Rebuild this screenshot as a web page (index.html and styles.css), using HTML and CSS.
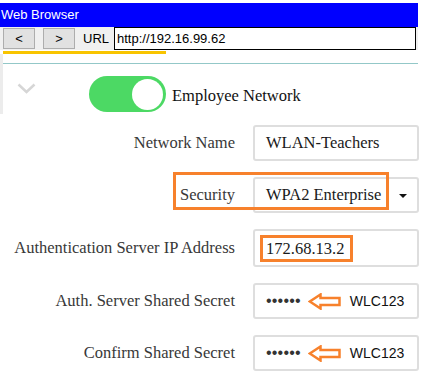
FILE: index.html
```html
<!DOCTYPE html>
<html lang="en">
<head>
  <meta charset="UTF-8" />
  <meta name="viewport" content="width=device-width, initial-scale=1.0"/>
  <title>Web Browser</title>
  <link rel="stylesheet" href="styles.css">
</head>
<body>
  <!-- Browser chrome -->
  <div class="browser">
    <div class="titlebar">Web Browser</div>
    <div class="toolbar">
      <button class="nav-btn">&lt;</button>
      <button class="nav-btn">&gt;</button>
      <span class="url-label">URL</span>
      <div class="url-field">http://192.16.99.62</div>
    </div>
    <div class="tab-line"></div>

    <!-- Network header -->
    <div class="page-top">
      <div class="divider"></div>
      <div class="network-head">
        <svg class="chevron" width="19" height="11" viewBox="0 0 19 11">
          <path d="M1.5 1.5 L9.5 9 L17.5 1.5" fill="none" stroke="#d6d6d6" stroke-width="2.5"/>
        </svg>
        <div class="toggle on"><span class="knob"></span></div>
        <span class="network-title">Employee Network</span>
      </div>
    </div>
  </div>

  <!-- WLAN form -->
  <div class="form">
    <div class="row">
      <label>Network Name</label>
      <div class="field">WLAN-Teachers</div>
    </div>
    <div class="row">
      <label>Security</label>
      <div class="field select">WPA2 Enterprise<span class="caret"></span></div>
    </div>
    <div class="row tall">
      <label>Authentication Server IP Address</label>
      <div class="field"><span class="mark">172.68.13.2</span></div>
    </div>
    <div class="row">
      <label>Auth. Server Shared Secret</label>
      <div class="field secret">
        <span class="dots">&bull;&bull;&bull;&bull;&bull;&bull;</span>
        <svg class="arrow" width="33" height="17" viewBox="0 0 33 17">
          <path d="M1.8 8.5 L12.5 1.5 L12.5 5 L31.5 5 L31.5 12 L12.5 12 L12.5 15.5 Z" fill="none" stroke="#f7812c" stroke-width="2.5" stroke-linejoin="miter"/>
        </svg>
        <span class="hint">WLC123</span>
      </div>
    </div>
    <div class="row">
      <label>Confirm Shared Secret</label>
      <div class="field secret">
        <span class="dots">&bull;&bull;&bull;&bull;&bull;&bull;</span>
        <svg class="arrow" width="33" height="17" viewBox="0 0 33 17">
          <path d="M1.8 8.5 L12.5 1.5 L12.5 5 L31.5 5 L31.5 12 L12.5 12 L12.5 15.5 Z" fill="none" stroke="#f7812c" stroke-width="2.5" stroke-linejoin="miter"/>
        </svg>
        <span class="hint">WLC123</span>
      </div>
    </div>

    <!-- callout around the security setting -->
    <div class="callout"></div>
  </div>
</body>
</html>
```

FILE: styles.css
```css
/* Browser frame + WLAN settings mockup */
body { margin: 0; background: #fff; font-family: "Liberation Serif", serif; }

.browser { width: 418px; padding-top: 3px; }
.titlebar { height: 24px; line-height: 24px; padding-left: 1px; background: #0000ff; color: #fff; font: 13px/24px "Liberation Sans", Arial, sans-serif; }

.toolbar { height: 23px; display: flex; align-items: center; background: #f0f0f0; font-family: "Liberation Sans", Arial, sans-serif; font-size: 13px; }
.nav-btn { width: 32px; height: 21px; margin-left: 3px; padding: 0; background: #e1e1e1; border: 1px solid #adadad; font: 13px "Liberation Sans", Arial, sans-serif; color: #000; }
.nav-btn + .nav-btn { margin-left: 8px; }
.url-label { margin-left: 8px; width: 25px; color: #000; }
.url-field { margin-left: 6px; width: 302px; height: 23px; box-sizing: border-box; border: 1px solid #000; background: #fff; padding-left: 2px; line-height: 21px; color: #000; }

.tab-line { width: 163px; height: 3px; margin: 1px 0 0 3px; background: #f8c400; }

.page-top { height: 51px; padding-top: 9px; border-left: 3px solid #ececec; }
.divider { height: 1px; background: #93c8c8; }
.network-head { display: flex; align-items: center; margin-top: 12px; }
.chevron { align-self: flex-start; margin: 7px 0 0 14px; }
.toggle { position: relative; width: 77px; height: 36px; margin-left: 53px; border-radius: 18px; background: #4cd964; }
.toggle .knob { position: absolute; top: 2.5px; right: 3px; width: 31px; height: 31px; border-radius: 50%; background: #fff; }
.network-title { margin: 3px 0 0 6px; font-size: 16.5px; color: #111; }

.form { position: relative; display: flex; flex-direction: column; gap: 16px; padding-top: 11px; }
.row { display: flex; align-items: center; height: 36px; }
.row.tall { height: 38px; }
.row label { width: 235px; text-align: right; font-size: 16.5px; color: #383838; }
.field { box-sizing: border-box; display: flex; align-items: center; width: 166px; height: 100%; margin-left: 18px; padding-left: 11px; border: 2px solid #dedede; border-radius: 3px; font-size: 16.5px; color: #1a1a1a; }
.select .caret { margin: 2px 10px 0 auto; border-left: 4px solid transparent; border-right: 4px solid transparent; border-top: 4px solid #111; }
.mark { margin-left: -6px; padding: 1px 6px 0 3px; border: 3px solid #f7812c; line-height: 20px; }

.secret { font-family: "Liberation Sans", Arial, sans-serif; }
.dots { font-size: 16px; letter-spacing: 0.2px; color: #333; }
.arrow { margin-left: 7px; }
.hint { margin-left: 9px; font-size: 14px; color: #111; }

.callout { position: absolute; left: 173px; top: 58px; width: 216px; height: 38px; box-sizing: border-box; border: 3px solid #f7812c; }
```
